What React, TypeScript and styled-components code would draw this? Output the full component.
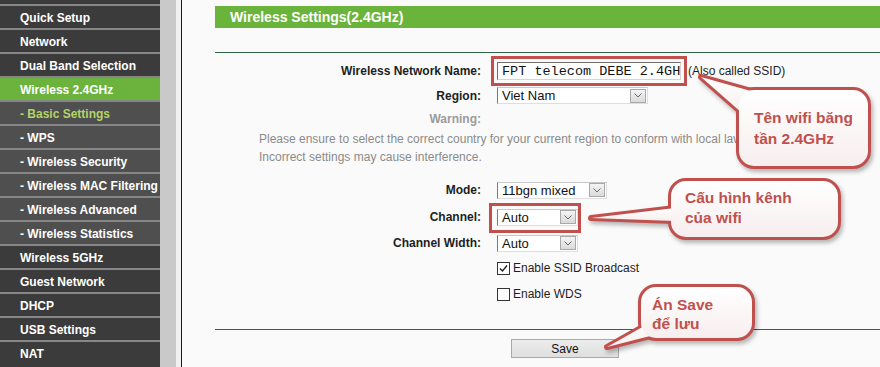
import { useId } from 'react';
import styled, { createGlobalStyle } from 'styled-components';

const GlobalStyle = createGlobalStyle`
  html, body { margin: 0; padding: 0; }
  body {
    background: #fafafa;
    font-family: "Liberation Sans", Arial, sans-serif;
    font-size: 12px;
    color: #1e1e1e;
  }
`;

const Page = styled.div`
  position: relative;
  display: flex;
  width: 880px;
  height: 367px;
  overflow: hidden;
  background: #fafafa;
`;

/* ---------- menu ---------- */

const Sidebar = styled.nav`
  flex: 0 0 160px;
  padding-top: 4px;
  background: #3b3b3b;
`;

type ItemKind = 'main' | 'active' | 'sub' | 'current';

const MenuItem = styled.div<{ $kind: ItemKind }>`
  height: 22px;
  line-height: 24px;
  border-top: 2px solid #868686;
  padding-left: 20px;
  font-weight: bold;
  white-space: nowrap;
  overflow: hidden;
  color: ${(p) => (p.$kind === 'current' ? '#b4d468' : '#ffffff')};
  background: ${(p) =>
    p.$kind === 'active' ? '#6bb33d' : p.$kind === 'main' ? '#3b3b3b' : '#4f4f4f'};
`;

const Gutter = styled.div`
  flex: 0 0 16px;
  background: #c9c9c9;
`;

const FrameEdge = styled.div`
  flex: 0 0 5px;
  background: #f1f1f1;
  border-right: 1px solid #1c1c1c;
`;

/* ---------- content ---------- */

const Content = styled.main`
  flex: 1;
  min-width: 0;
  padding-left: 33px;
`;

const TitleBar = styled.h1`
  margin: 6px 0 0;
  height: 22px;
  line-height: 22px;
  padding-left: 15px;
  background: #6bb43b;
  color: #fff;
  font-size: 14px;
  font-weight: bold;
  white-space: nowrap;
`;

const Rule = styled.hr<{ $top: number }>`
  margin: ${(p) => p.$top}px 0 0;
  border: 0;
  height: 1px;
  background: #2f6344;
`;

const Form = styled.div`
  margin-top: 6px;
`;

const Row = styled.div<{ $h: number }>`
  display: grid;
  grid-template-columns: 266px 1fr;
  column-gap: 16px;
  align-items: center;
  height: ${(p) => p.$h}px;
`;

const Label = styled.label<{ $muted?: boolean }>`
  text-align: right;
  font-weight: bold;
  white-space: nowrap;
  color: ${(p) => (p.$muted ? '#9c9c9c' : '#1e1e1e')};
`;

const Field = styled.div`
  display: flex;
  align-items: center;
  min-width: 0;
  white-space: nowrap;
`;

const Notice = styled.div`
  padding-left: 44px;
  margin-bottom: 12px;
  line-height: 18px;
  color: #8b8b8b;
  white-space: nowrap;
`;

const TextInput = styled.input`
  width: 184px;
  height: 18px;
  box-sizing: border-box;
  border: 1px solid;
  border-color: #6d6d6d #d4d4d4 #d4d4d4 #6d6d6d;
  padding: 0 0 0 4px;
  background: #fff;
  color: #111;
  font-family: "Liberation Mono", "Courier New", monospace;
  font-size: 13.5px;
  outline: 3px solid #c0504d;
  outline-offset: 3px;
`;

const Hint = styled.span`
  margin-left: 7px;
`;

const Marked = styled.div`
  position: relative;
  &::after {
    content: '';
    position: absolute;
    top: -6px;
    left: -8px;
    right: -3px;
    bottom: -7px;
    border: 3px solid #c0504d;
  }
`;

const SelectBox = styled.div<{ $w: number }>`
  display: flex;
  align-items: center;
  width: ${(p) => p.$w}px;
  height: 17px;
  box-sizing: border-box;
  border: 1px solid #dedede;
  border-left-color: #7b7b7b;
  border-top-color: #c8c8c8;
  padding-left: 4px;
  background: #fff;
  color: #111;
  font-size: 13px;
`;

const SelectArrow = styled.span`
  display: flex;
  align-items: center;
  justify-content: center;
  width: 16px;
  height: 14px;
  margin-left: auto;
  margin-right: 1px;
  box-sizing: border-box;
  border: 1px solid #a9a9a9;
  background: linear-gradient(#f4f4f4, #dadada);
`;

const CheckLine = styled.label`
  display: flex;
  align-items: center;
  gap: 3px;
  color: #1e1e1e;
`;

const CheckBox = styled.span`
  display: inline-flex;
  align-items: center;
  justify-content: center;
  width: 13px;
  height: 13px;
  box-sizing: border-box;
  border: 1px solid #333;
  background: #fff;
`;

const ButtonRow = styled.div`
  margin-top: 9px;
  padding-left: 296px;
`;

const SaveButton = styled.button`
  width: 108px;
  height: 19px;
  padding: 0;
  border: 1px solid #a9a9a9;
  background: linear-gradient(#ececec, #dfdfdf);
  color: #111;
  font-family: inherit;
  font-size: 12px;
`;

/* ---------- callouts ---------- */

const Bubble = styled.div<{ $x: number; $y: number; $w: number; $h: number }>`
  position: absolute;
  left: ${(p) => p.$x}px;
  top: ${(p) => p.$y}px;
  width: ${(p) => p.$w}px;
  height: ${(p) => p.$h}px;
`;

const BubbleShape = styled.svg`
  position: absolute;
  left: 0;
  top: 0;
  overflow: visible;
  filter: drop-shadow(2px 3px 2px rgba(0, 0, 0, 0.28));
`;

const BubbleText = styled.div<{ $pad: string; $lh: number }>`
  position: relative;
  padding: ${(p) => p.$pad};
  line-height: ${(p) => p.$lh}px;
  font-size: 15.5px;
  font-weight: bold;
  color: #c0504d;
  white-space: nowrap;
`;

type Pt = [number, number];

interface CalloutProps {
  x: number;
  y: number;
  w: number;
  h: number;
  tail: Pt[];
  pad: string;
  lh: number;
  lines: string[];
}

function Callout({ x, y, w, h, tail, pad, lh, lines }: CalloutProps) {
  const id = useId().replace(/:/g, '');
  const pts = tail.map((p) => p.join(',')).join(' ');
  const fill = `url(#${id})`;
  return (
    <Bubble $x={x} $y={y} $w={w} $h={h}>
      <BubbleShape width={w} height={h}>
        <defs>
          <linearGradient id={id} x1="0" y1="0" x2="0" y2="1">
            <stop offset="0" stopColor="#ffffff" />
            <stop offset="1" stopColor="#f7eeee" />
          </linearGradient>
        </defs>
        <polygon points={pts} fill="#c0504d" stroke="#c0504d" strokeWidth={6} strokeLinejoin="round" />
        <rect x={0} y={0} width={w} height={h} rx={15} fill="#c0504d" stroke="#c0504d" strokeWidth={6} />
        <polygon points={pts} fill={fill} />
        <rect x={0} y={0} width={w} height={h} rx={15} fill={fill} />
      </BubbleShape>
      <BubbleText $pad={pad} $lh={lh}>
        {lines.map((l) => (
          <div key={l}>{l}</div>
        ))}
      </BubbleText>
    </Bubble>
  );
}

const Chevron = () => (
  <svg width="8" height="5" viewBox="0 0 8 5">
    <path d="M0.5 0.5 L4 4 L7.5 0.5" fill="none" stroke="#666" strokeWidth="1" />
  </svg>
);

const Tick = () => (
  <svg width="11" height="11" viewBox="0 0 11 11">
    <path d="M2 5.5 L4.5 8 L9 2.5" fill="none" stroke="#222" strokeWidth="1.4" />
  </svg>
);

function Select({ w, value }: { w: number; value: string }) {
  return (
    <SelectBox $w={w}>
      {value}
      <SelectArrow>
        <Chevron />
      </SelectArrow>
    </SelectBox>
  );
}

const menu: { label: string; kind: ItemKind }[] = [
  { label: 'Quick Setup', kind: 'main' },
  { label: 'Network', kind: 'main' },
  { label: 'Dual Band Selection', kind: 'main' },
  { label: 'Wireless 2.4GHz', kind: 'active' },
  { label: '- Basic Settings', kind: 'current' },
  { label: '- WPS', kind: 'sub' },
  { label: '- Wireless Security', kind: 'sub' },
  { label: '- Wireless MAC Filtering', kind: 'sub' },
  { label: '- Wireless Advanced', kind: 'sub' },
  { label: '- Wireless Statistics', kind: 'sub' },
  { label: 'Wireless 5GHz', kind: 'main' },
  { label: 'Guest Network', kind: 'main' },
  { label: 'DHCP', kind: 'main' },
  { label: 'USB Settings', kind: 'main' },
  { label: 'NAT', kind: 'main' },
];

export default function App() {
  return (
    <Page>
      <GlobalStyle />
      <Sidebar>
        {menu.map((m) => (
          <MenuItem key={m.label} $kind={m.kind}>
            {m.label}
          </MenuItem>
        ))}
      </Sidebar>
      <Gutter />
      <FrameEdge />
      <Content>
        <TitleBar>Wireless Settings(2.4GHz)</TitleBar>
        <Rule $top={24} />
        <Form>
          <Row $h={24}>
            <Label>Wireless Network Name:</Label>
            <Field>
              <TextInput readOnly value="FPT telecom DEBE 2.4GH" />
              <Hint>(Also called SSID)</Hint>
            </Field>
          </Row>
          <Row $h={25}>
            <Label>Region:</Label>
            <Field>
              <Select w={151} value="Viet Nam" />
            </Field>
          </Row>
          <Row $h={22}>
            <Label $muted>Warning:</Label>
          </Row>
          <Notice>
            <div>Please ensure to select the correct country for your current region to conform with local laws.</div>
            <div>Incorrect settings may cause interference.</div>
          </Notice>
          <Row $h={24}>
            <Label>Mode:</Label>
            <Field>
              <Select w={110} value="11bgn mixed" />
            </Field>
          </Row>
          <Row $h={30}>
            <Label>Channel:</Label>
            <Field>
              <Marked>
                <Select w={81} value="Auto" />
              </Marked>
            </Field>
          </Row>
          <Row $h={22}>
            <Label>Channel Width:</Label>
            <Field>
              <Select w={81} value="Auto" />
            </Field>
          </Row>
          <Row $h={28}>
            <span />
            <CheckLine>
              <CheckBox>
                <Tick />
              </CheckBox>
              Enable SSID Broadcast
            </CheckLine>
          </Row>
          <Row $h={24}>
            <span />
            <CheckLine>
              <CheckBox />
              Enable WDS
            </CheckLine>
          </Row>
        </Form>
        <Rule $top={23} />
        <ButtonRow>
          <SaveButton>Save</SaveButton>
        </ButtonRow>
      </Content>

      <Callout
        x={739}
        y={90}
        w={129}
        h={76}
        tail={[[-38, -13], [3, 23], [19, 3]]}
        pad="17px 0 0 15px"
        lh={21}
        lines={['Tên wifi băng', 'tần 2.4GHz']}
      />
      <Callout
        x={671}
        y={181}
        w={167}
        h={56}
        tail={[[-80, 37], [4, 27], [4, 40]]}
        pad="7px 0 0 14px"
        lh={20}
        lines={['Cấu hình kênh', 'của wifi']}
      />
      <Callout
        x={641}
        y={287}
        w={111}
        h={51}
        tail={[[-34, 60], [5, 38], [17, 47]]}
        pad="8px 0 0 11px"
        lh={19}
        lines={['Án Save', 'để lưu']}
      />
    </Page>
  );
}
